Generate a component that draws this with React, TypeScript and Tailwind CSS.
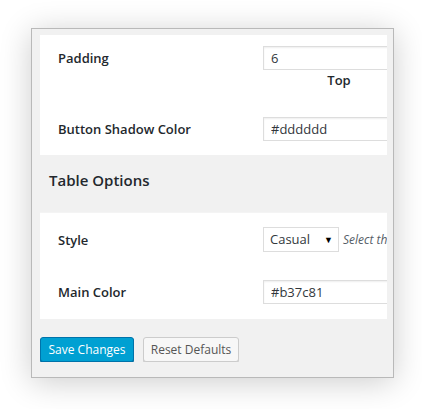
import React from 'react';

const font = { fontFamily: '"Open Sans", "Noto Sans", sans-serif' };

function TextInput({ value }: { value: string }) {
  return (
    <input
      readOnly
      value={value}
      className="h-[24px] w-[170px] shrink-0 border border-[#dddddd] bg-white px-[7px] text-[13px] text-[#32373c] shadow-[inset_0_1px_2px_rgba(0,0,0,0.07)] outline-none"
    />
  );
}

export default function App() {
  return (
    <div className="min-h-[409px] w-[422px] bg-white pl-[31px] pt-[28px]" style={font}>
      <div className="h-[350px] w-[363px] border border-[#b9b9b9] bg-[#f1f1f1] pl-[8px] pt-[6px] shadow-[0_4px_30px_rgba(0,0,0,0.2)]">
        <div className="w-[347px] overflow-hidden">
          {/* general options */}
          <div className="bg-white pb-[14px] pl-[18px] pt-[11px]">
            <div className="flex">
              <div className="w-[205px] shrink-0 text-[13px] font-semibold leading-[24px] text-[#23282d]">Padding</div>
              <div className="flex flex-col">
                <TextInput value="6" />
                <div className="w-[152px] text-center text-[13px] font-semibold leading-[20px] text-[#23282d]">Top</div>
              </div>
            </div>
            <div className="mt-[27px] flex items-center">
              <div className="w-[205px] shrink-0 text-[13px] font-semibold leading-[24px] text-[#23282d]">Button Shadow Color</div>
              <TextInput value="#dddddd" />
            </div>
          </div>

          <div className="flex h-[58px] items-center border-b border-[#f4f4f4] pb-[6px] pl-[9px]">
            <h2 className="text-[15px] font-semibold text-[#23282d]">Table Options</h2>
          </div>

          {/* table options */}
          <div className="bg-white pb-[15px] pl-[18px] pt-[14px]">
            <div className="flex items-center">
              <div className="w-[205px] shrink-0 text-[13px] font-semibold leading-[24px] text-[#23282d]">Style</div>
              <div className="flex h-[25px] w-[76px] shrink-0 items-center justify-between border border-[#dddddd] bg-white pl-[6px] pr-[5px] text-[13px] text-[#32373c]">
                <span>Casual</span>
                <span className="text-[9px] text-black">▼</span>
              </div>
              <span className="ml-[4px] whitespace-nowrap text-[12px] italic text-[#555d66]">Select the style</span>
            </div>
            <div className="mt-[28px] flex items-center">
              <div className="w-[205px] shrink-0 text-[13px] font-semibold leading-[24px] text-[#23282d]">Main Color</div>
              <TextInput value="#b37c81" />
            </div>
          </div>

          <div className="mt-[18px] flex gap-[9px]">
            <button className="h-[25px] w-[94px] rounded-[3px] border border-[#0073aa] bg-[#00a0d2] text-[12px] text-white shadow-[0_1px_0_#006799]">
              Save Changes
            </button>
            <button className="h-[25px] w-[96px] rounded-[3px] border border-[#cccccc] bg-[#f7f7f7] text-[12px] text-[#555555] shadow-[0_1px_0_#cccccc]">
              Reset Defaults
            </button>
          </div>
        </div>
      </div>
    </div>
  );
}
